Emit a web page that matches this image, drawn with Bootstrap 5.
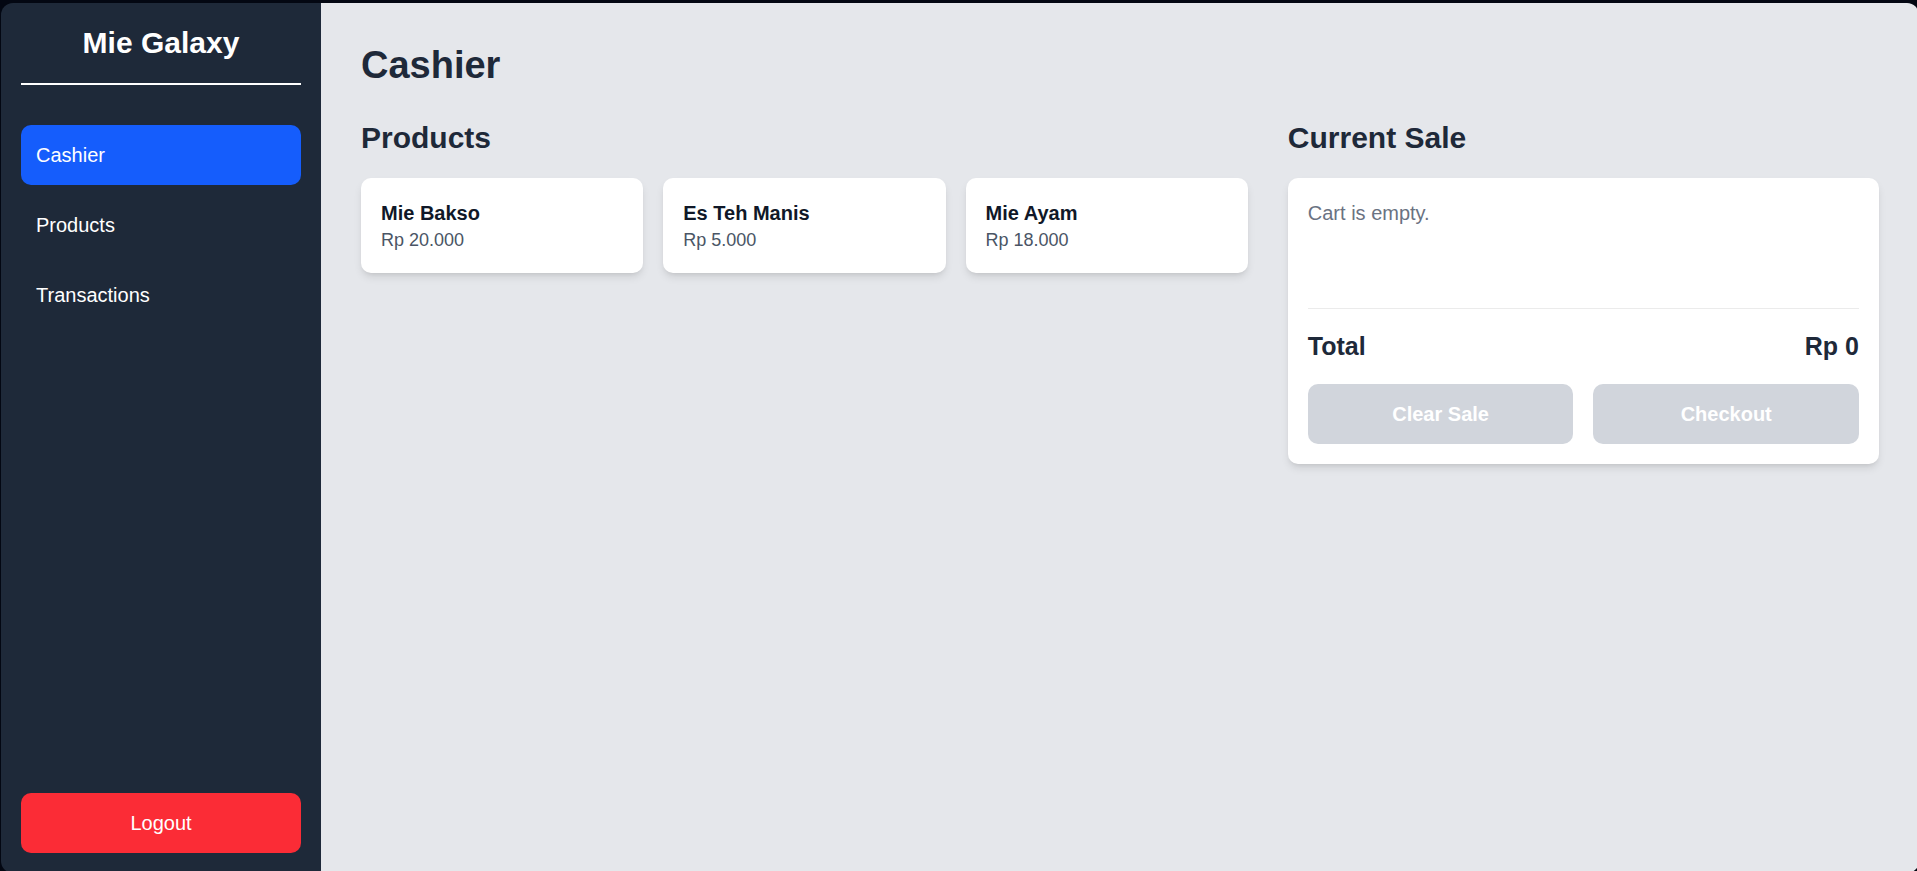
<!DOCTYPE html>
<html lang="en">
<head>
<meta charset="utf-8">
<meta name="viewport" content="width=device-width, initial-scale=1">
<title>Mie Galaxy - Cashier</title>
<link href="https://cdn.jsdelivr.net/npm/bootstrap@5.3.0/dist/css/bootstrap.min.css" rel="stylesheet">
<style>
  body {
    background: #030712;
    font-family: "Liberation Sans", Arial, sans-serif;
    font-size: 20px;
    line-height: 30px;
    color: #101828;
  }
  .app-window {
    height: calc(100vh - 1px);
    margin: 3px -2px 0 1px;
    border-radius: 12px;
  }
  .sidebar { width: 320px; padding: 20px; background: #1e2939; }
  .brand {
    font-size: 30px;
    line-height: 40px;
    padding-bottom: 20px;
    margin-bottom: 40px;
    border-bottom: 2px solid #fff;
  }
  .menu { gap: 10px; }
  .menu .nav-link {
    --bs-nav-pills-border-radius: 10px;
    --bs-nav-pills-link-active-bg: #155dfc;
    padding: 15px;
    color: #fff;
  }
  .action {
    --bs-btn-font-size: 20px;
    --bs-btn-line-height: 30px;
    --bs-btn-padding-y: 15px;
    --bs-btn-border-width: 0;
    --bs-btn-border-radius: 10px;
    --bs-btn-disabled-bg: #d1d5dc;
    --bs-btn-disabled-color: #fff;
    --bs-btn-disabled-opacity: 1;
  }
  .action-logout {
    --bs-btn-bg: #fb2c36;
    --bs-btn-color: #fff;
    --bs-btn-hover-bg: #e7000b;
    --bs-btn-hover-color: #fff;
  }
  .page { padding: 40px; background: #e5e7eb; }
  .page h1, .page h2, .total { color: #1e2939; }
  .page h1 { font-size: 38px; line-height: 45px; margin-bottom: 30px; }
  .page h2 { font-size: 30px; line-height: 40px; margin-bottom: 20px; }
  .register { display: grid; grid-template-columns: 3fr 2fr; gap: 40px; }
  .product-grid { display: grid; grid-template-columns: repeat(3, 1fr); gap: 20px; }
  .panel {
    padding: 20px;
    border: 0;
    border-radius: 10px;
    background: #fff;
    box-shadow: 0 5px 8px -1px rgba(0, 0, 0, .1), 0 3px 5px -3px rgba(0, 0, 0, .1);
  }
  .product-name { color: #101828; }
  .price { font-size: 18px; line-height: 25px; color: #4a5565; }
  .cart { min-height: 110px; color: #6a7282; }
  .total {
    font-size: 25px;
    line-height: 35px;
    padding: 20px 0;
    border-top: 1px solid #ebebeb;
  }
  .actions { gap: 20px; }
  .actions .btn { flex: 1 1 0; }
  @media (max-width: 1100px) {
    .register, .product-grid { grid-template-columns: 1fr; }
    .sidebar { width: 220px; }
  }
</style>
</head>
<body class="vh-100 overflow-hidden">
<div class="app-window d-flex overflow-hidden">
  <aside class="sidebar d-flex flex-column flex-shrink-0">
    <div class="brand text-center text-white fw-bold">Mie Galaxy</div>
    <nav class="menu nav nav-pills flex-column">
      <a class="nav-link active" href="#cashier" aria-current="page">Cashier</a>
      <a class="nav-link" href="#products">Products</a>
      <a class="nav-link" href="#transactions">Transactions</a>
    </nav>
    <button type="button" class="btn action action-logout w-100 mt-auto">Logout</button>
  </aside>

  <main class="page flex-grow-1 overflow-auto">
    <h1 class="fw-bold">Cashier</h1>
    <div class="register">
      <section>
        <h2 class="fw-bold">Products</h2>
        <div class="product-grid">
          <button type="button" class="panel text-start">
            <span class="product-name d-block fw-bold">Mie Bakso</span>
            <span class="price d-block">Rp 20.000</span>
          </button>
          <button type="button" class="panel text-start">
            <span class="product-name d-block fw-bold">Es Teh Manis</span>
            <span class="price d-block">Rp 5.000</span>
          </button>
          <button type="button" class="panel text-start">
            <span class="product-name d-block fw-bold">Mie Ayam</span>
            <span class="price d-block">Rp 18.000</span>
          </button>
        </div>
      </section>

      <section>
        <h2 class="fw-bold">Current Sale</h2>
        <div class="panel">
          <div class="cart">
            <p class="mb-0">Cart is empty.</p>
          </div>
          <div class="total d-flex justify-content-between fw-bold">
            <span>Total</span>
            <span>Rp 0</span>
          </div>
          <div class="actions d-flex">
            <button type="button" class="btn action fw-bold" disabled>Clear Sale</button>
            <button type="button" class="btn action fw-bold" disabled>Checkout</button>
          </div>
        </div>
      </section>
    </div>
  </main>
</div>
<script src="https://cdn.jsdelivr.net/npm/bootstrap@5.3.0/dist/js/bootstrap.bundle.min.js"></script>
</body>
</html>
